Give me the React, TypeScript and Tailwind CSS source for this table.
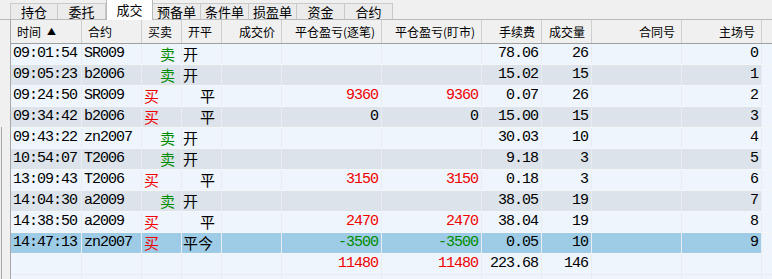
const tabs = ["持仓", "委托", "成交", "预备单", "条件单", "损盈单", "资金", "合约"]

const cols = [
  { title: "时间", w: 71, align: "left" },
  { title: "合约", w: 60, align: "left" },
  { title: "买卖", w: 40, align: "left" },
  { title: "开平", w: 40, align: "left" },
  { title: "成交价", w: 60, align: "right" },
  { title: "平仓盈亏(逐笔)", w: 100, align: "right" },
  { title: "平仓盈亏(盯市)", w: 100, align: "right" },
  { title: "手续费", w: 60, align: "right" },
  { title: "成交量", w: 50, align: "right" },
  { title: "合同号", w: 90, align: "right" },
  { title: "主场号", w: 80, align: "right" },
]

const rows = [
  ["09:01:54", "SR009", "卖", "开", "", "", "", "78.06", "26", "", "0"],
  ["09:05:23", "b2006", "卖", "开", "", "", "", "15.02", "15", "", "1"],
  ["09:24:50", "SR009", "买", "平", "", "9360", "9360", "0.07", "26", "", "2"],
  ["09:34:42", "b2006", "买", "平", "", "0", "0", "15.00", "15", "", "3"],
  ["09:43:22", "zn2007", "卖", "开", "", "", "", "30.03", "10", "", "4"],
  ["10:54:07", "T2006", "卖", "开", "", "", "", "9.18", "3", "", "5"],
  ["13:09:43", "T2006", "买", "平", "", "3150", "3150", "0.18", "3", "", "6"],
  ["14:04:30", "a2009", "卖", "开", "", "", "", "38.05", "19", "", "7"],
  ["14:38:50", "a2009", "买", "平", "", "2470", "2470", "38.04", "19", "", "8"],
  ["14:47:13", "zn2007", "买", "平今", "", "-3500", "-3500", "0.05", "10", "", "9"],
]

const total = ["", "", "", "", "", "11480", "11480", "223.68", "146", "", ""]

const mono = { fontFamily: "'Liberation Mono', 'DejaVu Sans Mono', monospace" }
const cjk = { fontFamily: "'Noto Sans CJK SC', 'Noto Sans', sans-serif" }

function numColor(v: string) {
  if (v === "" || v === "0") return "text-black"
  return v.startsWith("-") ? "text-[#008c00]" : "text-[#f00000]"
}

function Cell({ v, i }: { v: string; i: number }) {
  const w = cols[i].w
  if (i === 2) {
    const buy = v === "买"
    return (
      <div style={{ width: w, ...cjk }} className={`h-full flex items-center border-r border-[#e9edf1] text-[15px] ${buy ? "pl-[2px] text-[#f00000]" : "pl-[18px] text-[#008c00]"}`}>
        {v}
      </div>
    )
  }
  if (i === 3) {
    return (
      <div style={{ width: w, ...cjk }} className={`h-full flex items-center border-r border-[#e9edf1] text-[15px] text-black ${v === "平" ? "pl-[18px]" : "pl-[1px]"}`}>
        {v}
      </div>
    )
  }
  const left = i < 2
  const color = i === 5 || i === 6 ? numColor(v) : "text-black"
  return (
    <div style={{ width: w, ...mono }} className={`h-full flex items-center border-r border-[#e9edf1] text-[15px] tracking-[-1px] ${left ? "justify-start pl-[2px]" : "justify-end pr-[3px]"} ${color}`}>
      {v}
    </div>
  )
}

export default function App() {
  return (
    <div className="w-[772px] h-[279px] bg-[#f0f0f0] overflow-hidden flex flex-col">
      {/* tab strip */}
      <div className="flex items-end h-[20px] pl-[10px] border-b border-[#b9b9b9]" style={cjk}>
        {tabs.map(t => {
          const sel = t === "成交"
          return sel ? (
            <div key={t} className="w-[47px] h-[21px] -mb-px bg-white border-x border-t border-[#b9b9b9] flex items-center justify-center text-[13px] text-black z-10">
              {t}
            </div>
          ) : (
            <div key={t} className="w-[48px] h-[16px] bg-[#ebebeb] border-r border-t border-[#c9c9c9] first:border-l flex items-center justify-center text-[13px] text-black">
              {t}
            </div>
          )
        })}
      </div>

      <div className="flex flex-1 min-h-0">
        <div className="w-[10px] flex flex-col">
          <div className="h-[107px]" />
          <div className="flex-1 ml-[1px] border-l border-[#a8a8a8]" />
        </div>
        <div className="flex-1 border-l border-[#a8a8a8] bg-[#eef5fd] flex flex-col">
          {/* header */}
          <div className="flex h-[24px] bg-[#f0f0f0] border-b border-[#a0a0a0]" style={cjk}>
            {cols.map((c, i) => (
              <div key={c.title} style={{ width: c.w }} className={`h-full flex items-center border-r border-[#cfcfcf] text-[12px] text-black px-[6px] ${c.align === "right" ? "justify-end" : "justify-start"}`}>
                {c.title}
                {i === 0 && <span className="ml-[6px] text-[9px]">▲</span>}
              </div>
            ))}
            <div className="flex-1" />
          </div>
          {rows.map((r, ri) => {
            const bg = ri === 9 ? "bg-[#9ecbe5]" : ri % 2 === 0 ? "bg-[#eef5fd]" : "bg-[#dce3eb]"
            return (
              <div key={ri} className="flex h-[21px] border-b border-[#f4f6f8]">
                <div className={`flex ${bg}`}>
                  {r.map((v, i) => <Cell key={i} v={v} i={i} />)}
                </div>
                <div className="flex-1 bg-[#eef5fd]" />
              </div>
            )
          })}
          <div className="flex h-[21px] border-b border-[#e9edf1]">
            {total.map((v, i) => <Cell key={i} v={v} i={i} />)}
          </div>
          <div className="flex flex-1">
            {cols.map(c => (
              <div key={c.title} style={{ width: c.w }} className="border-r border-[#e9edf1]" />
            ))}
          </div>
        </div>
      </div>
    </div>
  )
}
